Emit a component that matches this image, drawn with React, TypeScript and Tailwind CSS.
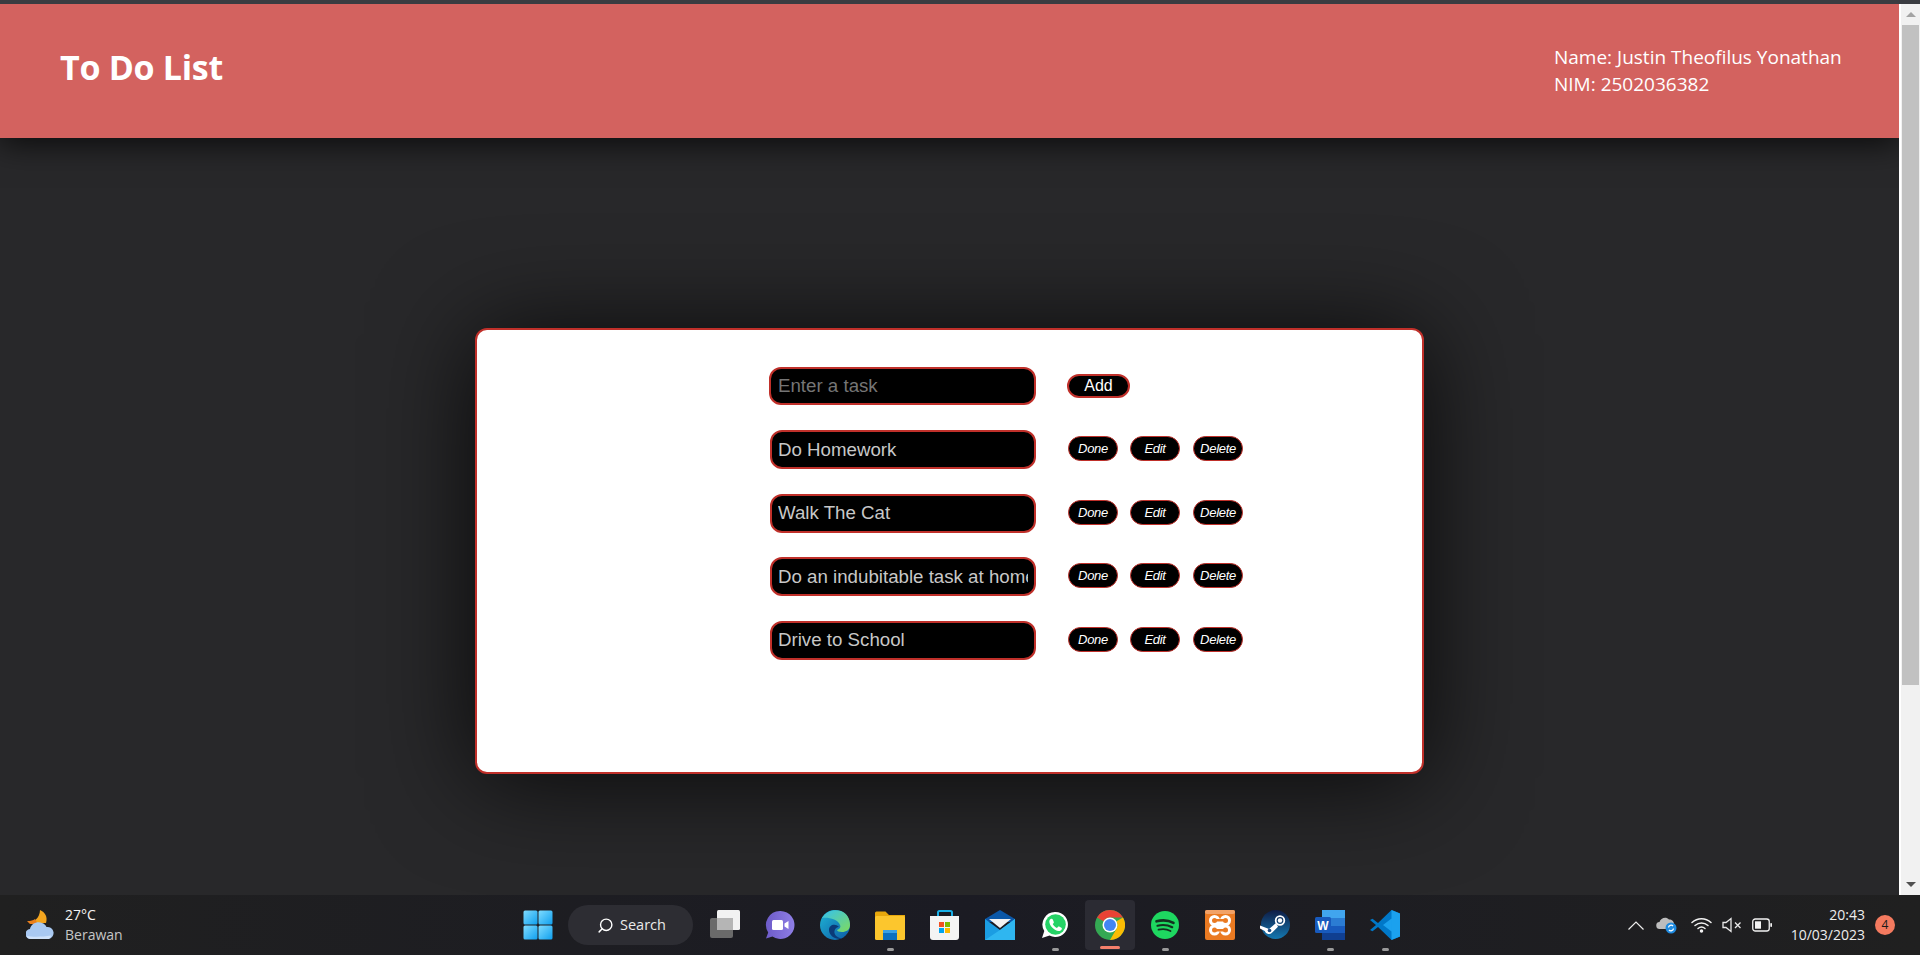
import { Search } from 'lucide-react';

const tasks = ['Do Homework', 'Walk The Cat', 'Do an indubitable task at home today', 'Drive to School'];

function WindowsIcon() {
  return (
    <svg width="30" height="30" viewBox="0 0 30 30" aria-hidden="true">
      <defs>
        <linearGradient id="win" x1="0" y1="0" x2="1" y2="1">
          <stop offset="0" stopColor="#7fdcff" />
          <stop offset="1" stopColor="#0f9fee" />
        </linearGradient>
      </defs>
      <rect x="0.5" y="0.5" width="14" height="14" rx="1.5" fill="url(#win)" />
      <rect x="15.5" y="0.5" width="14" height="14" rx="1.5" fill="url(#win)" />
      <rect x="0.5" y="15.5" width="14" height="14" rx="1.5" fill="url(#win)" />
      <rect x="15.5" y="15.5" width="14" height="14" rx="1.5" fill="url(#win)" />
    </svg>
  );
}

function TaskViewIcon() {
  return (
    <svg width="30" height="30" viewBox="0 0 30 30" aria-hidden="true">
      <rect x="0" y="8" width="23" height="20" rx="2" fill="#6a6a6a" />
      <rect x="7" y="0" width="23" height="20" rx="1.5" fill="#f2f2f2" />
      <rect x="7" y="8" width="16" height="12" fill="#b5b5b5" />
    </svg>
  );
}

function TeamsIcon() {
  return (
    <svg width="30" height="30" viewBox="0 0 30 30" aria-hidden="true">
      <defs>
        <linearGradient id="teams" x1="0" y1="0" x2="1" y2="0">
          <stop offset="0" stopColor="#6d5bc8" />
          <stop offset="1" stopColor="#8f7fe6" />
        </linearGradient>
      </defs>
      <path d="M15.5 1a14 14 0 1 1-8 25.5L1 28.5l2.2-6A14 14 0 0 1 15.5 1Z" fill="url(#teams)" />
      <rect x="7" y="10" width="11" height="10" rx="1.5" fill="#fff" />
      <path d="M19.5 13.5 23.5 11v8l-4-2.5Z" fill="#fff" />
    </svg>
  );
}

function EdgeIcon() {
  return (
    <svg width="30" height="30" viewBox="0 0 30 30" aria-hidden="true">
      <defs>
        <linearGradient id="edgeA" x1="0" y1="0" x2="1" y2="1">
          <stop offset="0" stopColor="#1fb6d6" />
          <stop offset="1" stopColor="#0c59a4" />
        </linearGradient>
        <linearGradient id="edgeB" x1="0" y1="0" x2="1" y2="1">
          <stop offset="0" stopColor="#35c1f1" />
          <stop offset="1" stopColor="#7fdb5c" />
        </linearGradient>
      </defs>
      <circle cx="15" cy="15" r="15" fill="url(#edgeA)" />
      <path d="M2 8C6 1 14-1 21 1c6 2 9 8 9 14 0 5-4 7-8 7-3 0-5-1-5-2 3-1 4-3 3-5-2-6-12-8-18-7Z" fill="url(#edgeB)" />
      <path d="M19 17c-4-4-10-2-10 3 0 5 5 9 11 9 1 0 1 0 2-.4-6-1-9-5-7-9 1-2 3-3 4-2.600Z" fill="#0b3a78" />
    </svg>
  );
}

function FolderIcon() {
  return (
    <svg width="30" height="30" viewBox="0 0 30 30" aria-hidden="true">
      <path d="M0 3a1.500 1.500 0 0 1 1.500-1.500h9L14 5H30v4H0Z" fill="#e8a80c" />
      <rect x="0" y="6" width="30" height="24" rx="1.500" fill="#fcc62d" />
      <rect x="8" y="20" width="14" height="10" fill="#0d6fc0" />
      <rect x="8" y="20" width="14" height="3" fill="#3aa0e6" />
    </svg>
  );
}

function StoreIcon() {
  return (
    <svg width="30" height="30" viewBox="0 0 30 30" aria-hidden="true">
      <path d="M8 6V2.500A1.500 1.500 0 0 1 9.500 1h11A1.500 1.500 0 0 1 22 2.500V6" fill="none" stroke="#19b0e8" strokeWidth="2" />
      <path d="M0 6h29v21a3 3 0 0 1-3 3H3a3 3 0 0 1-3-3Z" fill="#f4f4f4" />
      <rect x="9" y="12" width="5" height="5" fill="#f25022" />
      <rect x="15" y="12" width="5" height="5" fill="#7fba00" />
      <rect x="9" y="18" width="5" height="5" fill="#00a4ef" />
      <rect x="15" y="18" width="5" height="5" fill="#ffb900" />
    </svg>
  );
}

function MailIcon() {
  return (
    <svg width="30" height="30" viewBox="0 0 30 30" aria-hidden="true">
      <path d="M0 9 15 0l15 9v3H0Z" fill="#0b58a8" />
      <path d="M4 9h22l-11 9Z" fill="#f4f4f4" />
      <path d="M0 9 15 20 30 9v21H0Z" fill="#1b9de2" />
      <path d="M30 9v21H0l15-10Z" fill="#2fb6f0" />
    </svg>
  );
}

function WhatsappIcon() {
  return (
    <svg width="28" height="28" viewBox="0 0 28 28" aria-hidden="true">
      <path d="M14.500 1a12.500 12.500 0 1 1-6 23.500L1 27l2.300-7A12.500 12.500 0 0 1 14.500 1Z" fill="#fff" />
      <circle cx="14.500" cy="13.500" r="10.300" fill="#25d366" />
      <path d="M10.500 7.800c.6 0 1 .1 1.300.8l1 2.300c.2.500 0 .9-.3 1.300l-.8.9c1 1.800 2.300 3 4.200 4l1-1.200c.3-.4.700-.5 1.200-.3l2.300 1.100c.5.300.6.700.4 1.300-.5 1.400-1.800 2.200-3.200 2.100-4.200-.4-9-5-9.300-9.300-.1-1.400.9-3 2.200-3Z" fill="#fff" />
    </svg>
  );
}

function ChromeIcon() {
  return (
    <svg width="30" height="30" viewBox="0 0 30 30" aria-hidden="true">
      <circle cx="15" cy="15" r="15" fill="#34a853" />
      <path d="M15 0a15 15 0 0 1 13 7.500H15a7.500 7.500 0 0 0-6.500 3.750L2 7.500A15 15 0 0 1 15 0Z" fill="#ea4335" />
      <path d="M28 7.500A15 15 0 0 1 15 30l6.500-11.250A7.500 7.500 0 0 0 21.500 11.250Z" fill="#fbbc04" />
      <circle cx="15" cy="15" r="7.500" fill="#fff" />
      <circle cx="15" cy="15" r="6" fill="#4285f4" />
    </svg>
  );
}

function SpotifyIcon() {
  return (
    <svg width="28" height="28" viewBox="0 0 28 28" aria-hidden="true">
      <circle cx="14" cy="14" r="14" fill="#1ed760" />
      <g fill="none" stroke="#14301f" strokeLinecap="round">
        <path d="M5.500 10.300c5.500-1.500 12-1.100 17 1.500" strokeWidth="2.600" />
        <path d="M6.500 14.700c4.800-1.200 10.200-.8 14.700 1.500" strokeWidth="2.200" />
        <path d="M7.500 18.700c4-1 8.500-.6 12 1.300" strokeWidth="1.800" />
      </g>
    </svg>
  );
}

function XamppIcon() {
  return (
    <svg width="30" height="30" viewBox="0 0 30 30" aria-hidden="true">
      <rect x="0" y="0" width="30" height="30" rx="2" fill="#ea7a22" />
      <rect x="0" y="0" width="30" height="4" rx="2" fill="#f2a267" />
      <g fill="#fff">
        <circle cx="9.500" cy="10.500" r="5.500" />
        <circle cx="20.500" cy="10.500" r="5.500" />
        <circle cx="9.500" cy="20" r="5.500" />
        <circle cx="20.500" cy="20" r="5.500" />
        <rect x="8" y="9" width="14" height="12" />
      </g>
      <g fill="#ea7a22">
        <circle cx="9.500" cy="10.500" r="2.500" />
        <circle cx="20.500" cy="10.500" r="2.500" />
        <circle cx="9.500" cy="20" r="2.500" />
        <circle cx="20.500" cy="20" r="2.500" />
        <rect x="11" y="9" width="8" height="2.500" />
        <rect x="11" y="19" width="8" height="2.500" />
      </g>
    </svg>
  );
}

function SteamIcon() {
  return (
    <svg width="30" height="30" viewBox="0 0 30 30" aria-hidden="true">
      <defs>
        <linearGradient id="steam" x1="0" y1="0" x2="0" y2="1">
          <stop offset="0" stopColor="#0f1c45" />
          <stop offset="1" stopColor="#1478b0" />
        </linearGradient>
      </defs>
      <circle cx="15.500" cy="14.500" r="14.500" fill="url(#steam)" />
      <circle cx="20" cy="10.500" r="4.300" fill="none" stroke="#fff" strokeWidth="1.800" />
      <circle cx="20" cy="10.500" r="2.200" fill="#fff" />
      <path d="M0 15.500 9 19l7-6 2 3.800-5.500 5.500a4.500 4.500 0 0 1-7.800-1.300L0 18.500Z" fill="#fff" />
      <circle cx="9.500" cy="20.500" r="1.800" fill="#1b4a80" />
    </svg>
  );
}

function WordIcon() {
  return (
    <svg width="30" height="30" viewBox="0 0 30 30" aria-hidden="true">
      <rect x="7" y="0" width="23" height="8" fill="#41a5ee" />
      <rect x="7" y="8" width="23" height="8" fill="#2b7cd3" />
      <rect x="7" y="16" width="23" height="7" fill="#185abd" />
      <rect x="7" y="23" width="23" height="7" fill="#103f91" />
      <rect x="0" y="7" width="16" height="16" rx="1.500" fill="#185abd" />
      <text x="8" y="20" textAnchor="middle" fill="#fff" fontSize="12" fontWeight="700" fontFamily="Liberation Sans, sans-serif">W</text>
    </svg>
  );
}

function VscodeIcon() {
  return (
    <svg width="30" height="30" viewBox="0 0 30 30" aria-hidden="true">
      <path d="M21.500 0 30 3.500v23L21.500 30 8 17l-5.500 4.300L0 20l6-5-6-5 2.500-1.300L8 13Z" fill="#0078c8" />
      <path d="M21.500 0 30 3.500v23L21.500 30ZM21.500 8.500 13 15l8.500 6.500Z" fill="#1ba1ee" fillRule="evenodd" />
    </svg>
  );
}

function WeatherIcon() {
  return (
    <svg width="30" height="30" viewBox="0 0 30 30" aria-hidden="true">
      <path d="M14 0c5 2 8 7 6 13H2c5 0 12-5 12-13Z" fill="#f3a51f" />
      <path d="M1 11c4 0 6-.5 8-2l3 5H4Z" fill="#ea7f1c" />
      <path d="M5 29a5 5 0 0 1-1-10c1-5 7-8 12-6 2 .6 3.500 2 4.500 4a6 6 0 0 1 2 12Z" fill="#a9c9f2" />
      <path d="M5 29a5 5 0 0 1-4.500-3c6 1 16 1 24.500-.500a6 6 0 0 1-2 3.500Z" fill="#cfe2fa" />
    </svg>
  );
}

function CloudSyncIcon() {
  return (
    <svg width="21" height="18" viewBox="0 0 21 18" aria-hidden="true">
      <path d="M4 13a3.500 3.500 0 0 1-.5-7C4.500 2 10 0 13 3.500c3 0 5 2 5 4.500v5Z" fill="#bdbdbd" />
      <circle cx="15" cy="12" r="5.500" fill="#1f8be0" />
      <path d="M12.500 11.500a2.600 2.600 0 0 1 4.500-1.500M17.500 12.500a2.600 2.600 0 0 1-4.500 1.500" fill="none" stroke="#fff" strokeWidth="1.300" />
    </svg>
  );
}

function WifiIcon() {
  return (
    <svg width="21" height="16" viewBox="0 0 21 16" fill="none" stroke="#f2f2f2" strokeWidth="1.500" strokeLinecap="round" aria-hidden="true">
      <path d="M1 5.500c5.500-5 13.500-5 19 0" />
      <path d="M4 8.500c3.800-3.300 9.200-3.300 13 0" />
      <path d="M7 11.500c2-1.600 5-1.600 7 0" />
      <circle cx="10.500" cy="14" r="1" fill="#f2f2f2" />
    </svg>
  );
}

function MuteIcon() {
  return (
    <svg width="20" height="16" viewBox="0 0 20 16" fill="none" stroke="#e8e8e8" strokeWidth="1.300" aria-hidden="true">
      <path d="M1 5.500h3L9 1.500v13L4 10.500H1Z" />
      <path d="M13 5.500l5.500 5.500M18.500 5.500 13 11" />
    </svg>
  );
}

function BatteryIcon() {
  return (
    <svg width="20" height="14" viewBox="0 0 20 14" aria-hidden="true">
      <rect x="0.750" y="1" width="16.500" height="12" rx="2.500" fill="none" stroke="#f2f2f2" strokeWidth="1.300" />
      <rect x="3" y="3.300" width="6" height="7.400" fill="#f2f2f2" />
      <rect x="18.300" y="5" width="1.700" height="4" rx="0.800" fill="#f2f2f2" />
    </svg>
  );
}

function Dock({ children, running, active }: { children: React.ReactNode; running?: boolean; active?: boolean }) {
  return (
    <div className="relative flex h-[50px] w-[55px] items-center justify-center">
      {active && <div className="absolute inset-y-0 left-[2.500px] w-[50px] rounded-[4px] bg-[#2b2b33]" />}
      <div className="relative flex">{children}</div>
      {running && <div className="absolute bottom-[-1px] left-[24px] h-[3px] w-[7px] rounded-full bg-[#9a9a9a]" />}
      {active && <div className="absolute bottom-[1px] left-[17.500px] h-[3px] w-[20px] rounded-full bg-[#f47f6b]" />}
    </div>
  );
}

function ActionButton({ label, className = '' }: { label: string; className?: string }) {
  return (
    <button
      type="button"
      className={`h-[25px] w-[50px] rounded-[13px] border border-[#c0302a] bg-black text-[13px] italic leading-none tracking-[-0.3px] text-white ${className}`}
    >
      {label}
    </button>
  );
}

export default function App() {
  return (
    <div className="flex h-[955px] w-[1920px] flex-col overflow-hidden bg-[#3a3c41] font-['Liberation_Sans',sans-serif]">
      <div className="h-[4px] shrink-0" />

      <div className="flex h-[891px] shrink-0">
        <main className="h-full w-[1899px] overflow-hidden bg-[#28282a]">
          <header className="flex h-[134px] items-center justify-between bg-[#d3625f] pl-[60px] pr-[60px] text-white font-['Open_Sans',sans-serif] shadow-[0_5px_30px_rgba(0,0,0,0.75)]">
            <h1 className="pb-[8px] text-[34px] font-bold tracking-[-0.3px]">To Do List</h1>
            <div className="w-[285px] whitespace-nowrap text-[19px] leading-[27px]">
              <p>Name: Justin Theofilus Yonathan</p>
              <p>NIM: 2502036382</p>
            </div>
          </header>

          <section className="mx-auto mt-[190px] h-[446px] w-[949px] rounded-[12px] border-2 border-[#c0302a] bg-white pt-[37px] pl-[292px] shadow-[0_5px_100px_rgba(0,0,0,0.8)]">
            <div className="flex flex-col gap-[25.5px]">
              <div className="flex h-[38px] items-center">
                <input
                  placeholder="Enter a task"
                  className="h-full w-[267px] rounded-[12px] border-2 border-[#c0302a] bg-black px-[7px] text-[18.700px] text-[#c8c8c8] placeholder:text-[#757575] outline-none"
                />
                <button
                  type="button"
                  className="ml-[31px] h-[24px] w-[63px] rounded-[12px] border-2 border-[#c0302a] bg-black text-[16px] leading-none text-white"
                >
                  Add
                </button>
              </div>
              {tasks.map((t) => (
                <div key={t} className="flex h-[38px] items-center pl-[1px]">
                  <input
                    readOnly
                    value={t}
                    className="h-[39px] w-[266px] rounded-[12px] border-2 border-[#c0302a] bg-black px-[6px] text-[18.700px] text-[#c8c8c8] outline-none"
                  />
                  <div className="ml-[32px] flex -translate-y-px gap-[12px]">
                    <ActionButton label="Done" />
                    <ActionButton label="Edit" />
                    <ActionButton label="Delete" className="ml-px" />
                  </div>
                </div>
              ))}
            </div>
          </section>
        </main>

        <aside className="flex h-full w-[21px] flex-col items-center border-l-2 border-white bg-[#f1f1f1]">
          <div className="flex h-[21px] w-full items-center justify-center">
            <div className="h-0 w-0 border-x-[5px] border-b-[5px] border-x-transparent border-b-[#a3a3a3]" />
          </div>
          <div className="h-[660px] w-[17px] bg-[#c1c1c1]" />
          <div className="flex-1" />
          <div className="flex h-[21px] w-full items-center justify-center">
            <div className="h-0 w-0 border-x-[5px] border-t-[5px] border-x-transparent border-t-[#505050]" />
          </div>
        </aside>
      </div>

      <footer className="relative flex h-[60px] shrink-0 items-center bg-linear-to-r from-[#202020] via-[#1b1b23] to-[#202020] font-['Open_Sans',sans-serif] text-white">
        <div className="flex w-[507px] items-center gap-[9px] pl-[26px]">
          <WeatherIcon />
          <div className="flex flex-col">
            <span className="text-[14px] leading-[20px] text-[#f4f4f4]">27°C</span>
            <span className="text-[14px] leading-[20px] text-[#c6c6c6]">Berawan</span>
          </div>
        </div>

        <div className="flex items-center">
          <div className="flex w-[61px] justify-center">
            <WindowsIcon />
          </div>
          <div className="flex h-[40px] w-[125px] items-center gap-[6px] rounded-[20px] bg-[#2d2d33] pl-[29px]">
            <Search size={17} className="-scale-x-100 text-white" />
            <span className="text-[14.500px] text-[#eaeaea]">Search</span>
          </div>
          <div className="ml-[4.500px] flex">
            <Dock><TaskViewIcon /></Dock>
            <Dock><TeamsIcon /></Dock>
            <Dock><EdgeIcon /></Dock>
            <Dock running><FolderIcon /></Dock>
            <Dock><StoreIcon /></Dock>
            <Dock><MailIcon /></Dock>
            <Dock running><WhatsappIcon /></Dock>
            <Dock active><ChromeIcon /></Dock>
            <Dock running><SpotifyIcon /></Dock>
            <Dock><XamppIcon /></Dock>
            <Dock><SteamIcon /></Dock>
            <Dock running><WordIcon /></Dock>
            <Dock running><VscodeIcon /></Dock>
          </div>
        </div>

        <div className="ml-auto flex items-center pr-[25px]">
          <svg width="16" height="9" viewBox="0 0 16 9" fill="none" stroke="#eeeeee" strokeWidth="1.200" aria-hidden="true">
            <path d="M0.500 8.500 8 1l7.500 7.500" />
          </svg>
          <div className="ml-[12px] flex"><CloudSyncIcon /></div>
          <div className="ml-[14px] flex"><WifiIcon /></div>
          <div className="ml-[10px] flex"><MuteIcon /></div>
          <div className="ml-[10px] flex"><BatteryIcon /></div>
          <div className="ml-[19px] flex flex-col items-end text-[14px] leading-[20px] text-[#ededed]">
            <span>20:43</span>
            <span>10/03/2023</span>
          </div>
          <div className="ml-[10px] flex h-[20px] w-[20px] items-center justify-center rounded-full bg-[#f47a5f] text-[12px] text-[#1a1a1a]">
            4
          </div>
        </div>
      </footer>
    </div>
  );
}
